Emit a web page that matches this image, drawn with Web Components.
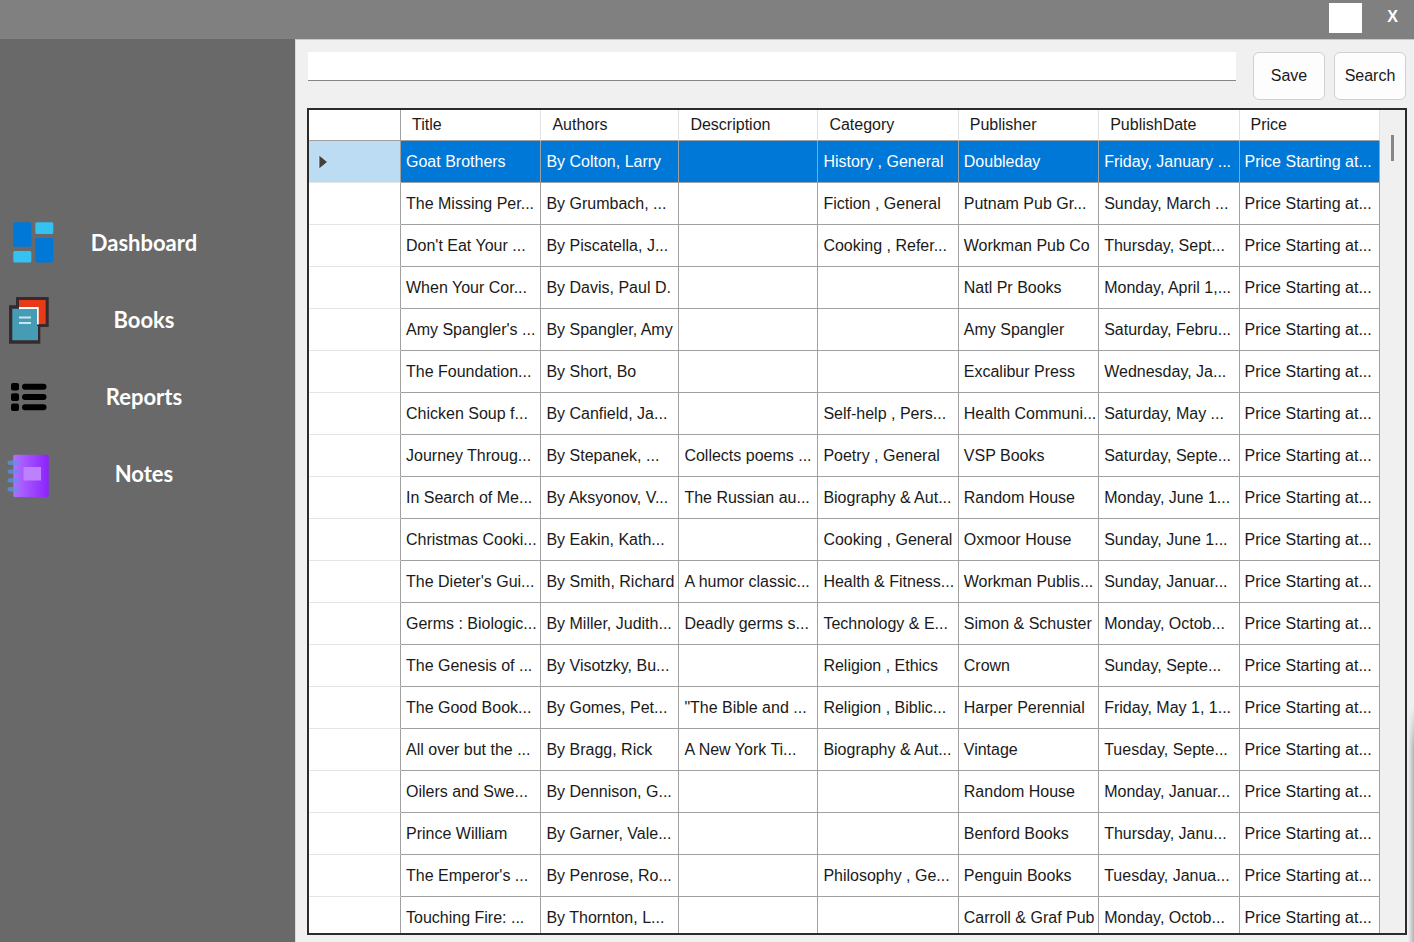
<!DOCTYPE html>
<html lang="en">
<head>
<meta charset="utf-8">
<title>Books</title>
<style>
  html, body { margin: 0; height: 100%; }
  body { font: 16px/20px "Liberation Sans", Arial, sans-serif; color: #1a1a1a; background: #f0f0f0; }
</style>
</head>
<body>
<library-app>
  <title-bar slot="top"></title-bar>
  <side-nav slot="side">
    <nav-item label="Dashboard">
      <svg width="60" height="77" viewBox="0 0 60 77" aria-hidden="true">
        <rect x="13.3" y="18.3" width="18" height="24.5" rx="1.5" fill="#0078d7"/>
        <rect x="35.3" y="18.3" width="18" height="11.7" rx="1.5" fill="#35c1f1"/>
        <rect x="13.3" y="47" width="18" height="11.5" rx="1.5" fill="#35c1f1"/>
        <rect x="35.3" y="34" width="18" height="24.5" rx="1.5" fill="#0078d7"/>
      </svg>
    </nav-item>
    <nav-item label="Books">
      <svg width="60" height="77" viewBox="0 0 60 77" aria-hidden="true">
        <path d="M16 16H48.7V46H40.3V62.8H9V24.3H16Z" fill="#37292c"/>
        <path d="M19 19H45.7V43H38V26H19Z" fill="#e83a16"/>
        <path d="M12.3 27.8H37V45H38V59.3H12.3Z" fill="#469bb5"/>
        <path d="M19 26H38.7V43.4H37V28H19Z" fill="#fff"/>
        <path d="M19 36.6H31M19 42H31" stroke="#c7e5ec" stroke-width="2"/>
      </svg>
    </nav-item>
    <nav-item label="Reports">
      <svg width="60" height="77" viewBox="0 0 60 77" aria-hidden="true">
        <rect x="11" y="25" width="8" height="7.6" rx="2"/>
        <rect x="11" y="35.3" width="8" height="7.6" rx="2"/>
        <rect x="11" y="45.5" width="8" height="7.6" rx="2"/>
        <path d="M25 28.8H43.5M25 39H43.5M25 49.2H43.5" stroke="#000" stroke-width="6" stroke-linecap="round"/>
      </svg>
    </nav-item>
    <nav-item label="Notes">
      <svg width="60" height="77" viewBox="0 0 60 77" aria-hidden="true">
        <defs><linearGradient id="cover"><stop offset="0" stop-color="#b070ff"/><stop offset="1" stop-color="#8d22fd"/></linearGradient></defs>
        <rect x="13.3" y="19.8" width="35.4" height="42.2" rx="1.5" fill="url(#cover)"/>
        <rect x="23.5" y="32" width="17.5" height="13.5" fill="#bd80ff"/>
        <g fill="#5c93e0" fill-opacity=".75">
          <rect x="7.5" y="25.6" width="11.5" height="4.4" rx="2.2"/>
          <rect x="7.5" y="34.4" width="11.5" height="4.4" rx="2.2"/>
          <rect x="7.5" y="43.2" width="11.5" height="4.4" rx="2.2"/>
          <rect x="7.5" y="52" width="11.5" height="4.4" rx="2.2"/>
        </g>
      </svg>
    </nav-item>
  </side-nav>
  <search-bar></search-bar>
  <book-grid></book-grid>
</library-app>

<template id="library-app">
  <style>
    :host { display: flex; flex-direction: column; height: 100vh; position: relative; overflow: hidden; }
    .body { display: flex; flex: 1; min-height: 0; }
    main { display: flex; flex-direction: column; flex: 1; min-width: 0; gap: 8px; box-sizing: border-box; padding: 12px 7px 7px 12px; background: #f0f0f0; border-top: 1px solid #c8c8c8; border-left: 1px solid #d8d8d8; }
    .shade { position: absolute; right: 0; bottom: 0; width: 6px; height: 25%; background: linear-gradient(to right, #f0f0f0, #b4b4b4); -webkit-mask-image: linear-gradient(transparent, #000 40px); mask-image: linear-gradient(transparent, #000 40px); }
  </style>
  <slot name="top"></slot>
  <div class="body">
    <slot name="side"></slot>
    <main><slot></slot></main>
  </div>
  <div class="shade"></div>
</template>

<template id="title-bar">
  <style>
    :host { display: flex; flex: none; align-items: flex-start; justify-content: flex-end; gap: 20px; height: 39px; box-sizing: border-box; padding: 3px 11px 0 0; background: #808080; }
    button { border: 0; padding: 0; margin: 0; }
    .max { width: 33px; height: 30px; background: #fff; }
    .close { width: 21px; height: 28px; background: none; color: #fff; font: bold 16px/28px "Liberation Sans", Arial, sans-serif; }
  </style>
  <button class="max" aria-label="Maximize"></button>
  <button class="close" aria-label="Close">X</button>
</template>

<template id="side-nav">
  <style>
    :host { display: block; flex: none; width: 295px; box-sizing: border-box; padding-top: 165px; background: #696969; }
  </style>
  <nav><slot></slot></nav>
</template>

<template id="nav-item">
  <style>
    :host { display: block; }
    a { display: grid; grid-template-columns: 60px 168px; align-items: center; height: 77px; color: #fff; text-decoration: none; font: bold 22px/28px Lato, sans-serif; }
    span { text-align: center; }
    slot { display: block; height: 77px; }
  </style>
  <a href="#"><slot></slot><span></span></a>
</template>

<template id="search-bar">
  <style>
    :host { display: flex; flex: none; gap: 9px; align-items: flex-start; padding-right: 1px; }
    input { flex: 1; min-width: 0; height: 29px; box-sizing: border-box; margin: 0 8px 0 0; padding: 0 6px; border: 0; border-bottom: 1px solid #868686; background: #fff; font: inherit; outline: 0; }
    button { width: 72px; height: 48px; margin: 0; padding: 0; box-sizing: border-box; border: 1px solid #d0d0d0; border-radius: 6px; background: #fdfdfd; color: #1a1a1a; font: inherit; }
  </style>
  <input type="text" aria-label="Search books">
  <button>Save</button>
  <button>Search</button>
</template>

<template id="book-grid">
  <style>
    :host { display: flex; flex: 1; min-height: 0; box-sizing: border-box; margin-left: -1px; border: 2px solid #2b2b2b; background: #f0f0f0; }
    .rows { flex: 1; min-width: 0; overflow: hidden; background: #fff; }
    table { width: 100%; table-layout: fixed; border-collapse: separate; border-spacing: 0; }
    .mark { width: 92px; }
    .authors { width: 138px; }
    .description { width: 139px; }
    th, td { box-sizing: border-box; height: 42px; padding: 0 0 0 5px; border-right: 1px solid #a0a0a0; border-bottom: 1px solid #a0a0a0; text-align: left; font-weight: normal; white-space: nowrap; overflow: hidden; }
    thead th { height: 31px; padding-left: 11px; border-right-color: #e2e2e2; }
    tr > :first-child { padding-left: 9px; border-right-color: #a0a0a0; }
    tbody th { border-bottom-color: #e4e4e4; }
    td { background-clip: padding-box; }
    .on td { background-color: #0078d7; color: #fff; }
    .on th { background: #bcdcf4; }
    svg { display: block; }
    .track { flex: none; width: 25px; padding: 25px 0 0 11px; box-sizing: border-box; }
    .thumb { width: 3px; height: 26px; background: #868686; }
  </style>
  <div class="rows">
    <table>
      <colgroup><col class="mark"><col><col class="authors"><col class="description"><col><col><col><col></colgroup>
      <thead></thead>
      <tbody></tbody>
    </table>
  </div>
  <div class="track"><div class="thumb"></div></div>
</template>

<script>
  class Part extends HTMLElement {
    constructor() {
      super();
      this.attachShadow({ mode: "open" })
        .append(document.getElementById(this.localName).content.cloneNode(true));
    }
  }

  const HEADS = ["Title", "Authors", "Description", "Category", "Publisher", "PublishDate", "Price"];
  const BOOKS = [
    ["Goat Brothers", "By Colton, Larry", "", "History , General", "Doubleday", "Friday, January ..."],
    ["The Missing Per...", "By Grumbach, ...", "", "Fiction , General", "Putnam Pub Gr...", "Sunday, March ..."],
    ["Don't Eat Your ...", "By Piscatella, J...", "", "Cooking , Refer...", "Workman Pub Co", "Thursday, Sept..."],
    ["When Your Cor...", "By Davis, Paul D.", "", "", "Natl Pr Books", "Monday, April 1,..."],
    ["Amy Spangler's ...", "By Spangler, Amy", "", "", "Amy Spangler", "Saturday, Febru..."],
    ["The Foundation...", "By Short, Bo", "", "", "Excalibur Press", "Wednesday, Ja..."],
    ["Chicken Soup f...", "By Canfield, Ja...", "", "Self-help , Pers...", "Health Communi...", "Saturday, May ..."],
    ["Journey Throug...", "By Stepanek, ...", "Collects poems ...", "Poetry , General", "VSP Books", "Saturday, Septe..."],
    ["In Search of Me...", "By Aksyonov, V...", "The Russian au...", "Biography & Aut...", "Random House", "Monday, June 1..."],
    ["Christmas Cooki...", "By Eakin, Kath...", "", "Cooking , General", "Oxmoor House", "Sunday, June 1..."],
    ["The Dieter's Gui...", "By Smith, Richard", "A humor classic...", "Health & Fitness...", "Workman Publis...", "Sunday, Januar..."],
    ["Germs : Biologic...", "By Miller, Judith...", "Deadly germs s...", "Technology & E...", "Simon & Schuster", "Monday, Octob..."],
    ["The Genesis of ...", "By Visotzky, Bu...", "", "Religion , Ethics", "Crown", "Sunday, Septe..."],
    ["The Good Book...", "By Gomes, Pet...", "\"The Bible and ...", "Religion , Biblic...", "Harper Perennial", "Friday, May 1, 1..."],
    ["All over but the ...", "By Bragg, Rick", "A New York Ti...", "Biography & Aut...", "Vintage", "Tuesday, Septe..."],
    ["Oilers and Swe...", "By Dennison, G...", "", "", "Random House", "Monday, Januar..."],
    ["Prince William", "By Garner, Vale...", "", "", "Benford Books", "Thursday, Janu..."],
    ["The Emperor's ...", "By Penrose, Ro...", "", "Philosophy , Ge...", "Penguin Books", "Tuesday, Janua..."],
    ["Touching Fire: ...", "By Thornton, L...", "", "", "Carroll & Graf Pub", "Monday, Octob..."]
  ];

  customElements.define("library-app", class extends Part {});
  customElements.define("title-bar", class extends Part {});
  customElements.define("side-nav", class extends Part {});
  customElements.define("nav-item", class extends Part {
    connectedCallback() {
      this.shadowRoot.querySelector("span").textContent = this.getAttribute("label");
    }
  });
  customElements.define("search-bar", class extends Part {});
  customElements.define("book-grid", class extends Part {
    connectedCallback() {
      const row = (section, tag, texts) => {
        const tr = section.insertRow();
        const mark = document.createElement("th");
        tr.append(mark);
        for (const text of texts) {
          const cell = document.createElement(tag);
          cell.textContent = text;
          tr.append(cell);
        }
        return tr;
      };
      const table = this.shadowRoot.querySelector("table");
      row(table.tHead, "th", HEADS);
      for (const book of BOOKS) row(table.tBodies[0], "td", [...book, "Price Starting at..."]);
      const current = table.tBodies[0].rows[0];
      current.className = "on";
      current.cells[0].innerHTML =
        '<svg width="12" height="18" viewBox="0 0 12 18"><path d="M1 2L9.5 9L1 16Z" fill="#404040" stroke="#e8eef2" stroke-width=".7"/></svg>';
    }
  });
</script>
</body>
</html>
